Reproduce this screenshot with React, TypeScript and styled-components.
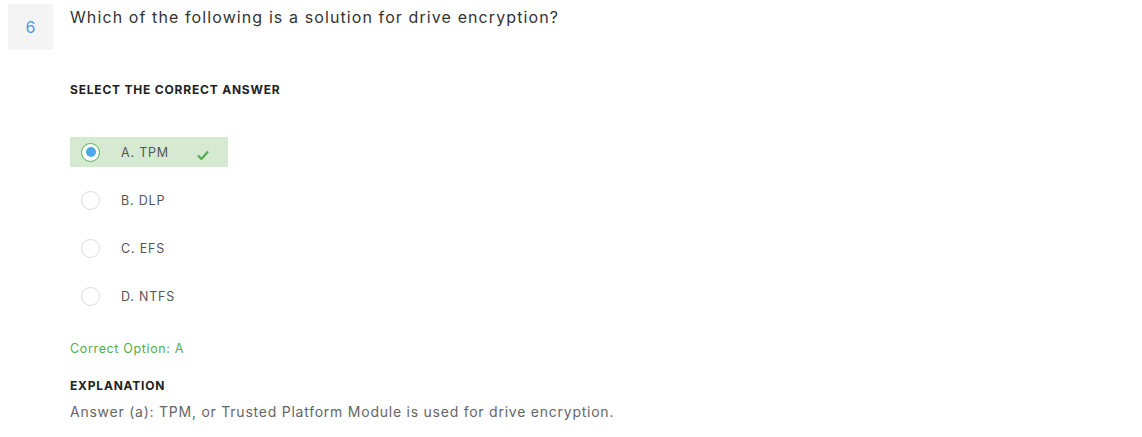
import React, { FC } from 'react';
import styled, { createGlobalStyle } from 'styled-components';

const GlobalStyle = createGlobalStyle`
  body {
    margin: 0;
    background: #fff;
    font-family: Inter, 'Liberation Sans', sans-serif;
  }
`;

const Page = styled.div`
  display: flex;
  align-items: flex-start;
  gap: 17px;
  padding: 4px 8px;
`;

const NumberBox = styled.div`
  flex: 0 0 45px;
  height: 46px;
  background: #f4f4f4;
  color: #4a9be6;
  font-size: 16px;
  display: flex;
  align-items: center;
  justify-content: center;
`;

const Body = styled.div`
  display: flex;
  flex-direction: column;
`;

const Question = styled.div`
  font-size: 16px;
  letter-spacing: 1.1px;
  color: #333;
  line-height: 26px;
`;

const Heading = styled.div<{ $top: number }>`
  margin-top: ${(p) => p.$top}px;
  font-size: 12px;
  font-weight: 700;
  letter-spacing: 0.8px;
  color: #222;
`;

const Options = styled.div`
  margin-top: 40px;
  display: flex;
  flex-direction: column;
  gap: 18px;
`;

const Option = styled.div<{ $correct?: boolean }>`
  display: flex;
  align-items: center;
  width: 158px;
  height: 30px;
  padding-left: 11px;
  box-sizing: border-box;
  background: ${(p) => (p.$correct ? '#d6ead1' : 'transparent')};
  color: #555;
  font-size: 12.5px;
  letter-spacing: 0.8px;
`;

const Radio = styled.span<{ $checked?: boolean }>`
  width: 19px;
  height: 19px;
  box-sizing: border-box;
  border-radius: 50%;
  border: 1px solid ${(p) => (p.$checked ? '#59b25a' : '#ddd')};
  background: #fff;
  display: flex;
  align-items: center;
  justify-content: center;
  margin-right: 21px;

  &::after {
    content: '';
    display: ${(p) => (p.$checked ? 'block' : 'none')};
    width: 10px;
    height: 10px;
    border-radius: 50%;
    background: #4aa8ea;
  }
`;

const Check = styled.svg`
  margin-left: 28px;
  margin-top: 5px;
`;

const CorrectLine = styled.div`
  margin-top: 30px;
  font-size: 12.5px;
  letter-spacing: 0.65px;
  color: #4cb050;
`;

const Explanation = styled.div`
  margin-top: 10px;
  font-size: 14px;
  letter-spacing: 0.76px;
  color: #666;
`;

const options = ['A. TPM', 'B. DLP', 'C. EFS', 'D. NTFS'];

const App: FC = () => (
  <>
    <GlobalStyle />
    <Page>
      <NumberBox>6</NumberBox>
      <Body>
        <Question>Which of the following is a solution for drive encryption?</Question>
        <Heading $top={52}>SELECT THE CORRECT ANSWER</Heading>
        <Options>
          {options.map((o, i) => (
            <Option key={o} $correct={i === 0}>
              <Radio $checked={i === 0} />
              {o}
              {i === 0 && (
                <Check width="12" height="10" viewBox="0 0 12 10">
                  <path d="M1 5.5 L4.5 9 L11 1.5" fill="none" stroke="#4cb050" strokeWidth="2.2" />
                </Check>
              )}
            </Option>
          ))}
        </Options>
        <CorrectLine>Correct Option: A</CorrectLine>
        <Heading $top={22}>EXPLANATION</Heading>
        <Explanation>Answer (a): TPM, or Trusted Platform Module is used for drive encryption.</Explanation>
      </Body>
    </Page>
  </>
);

export default App;
